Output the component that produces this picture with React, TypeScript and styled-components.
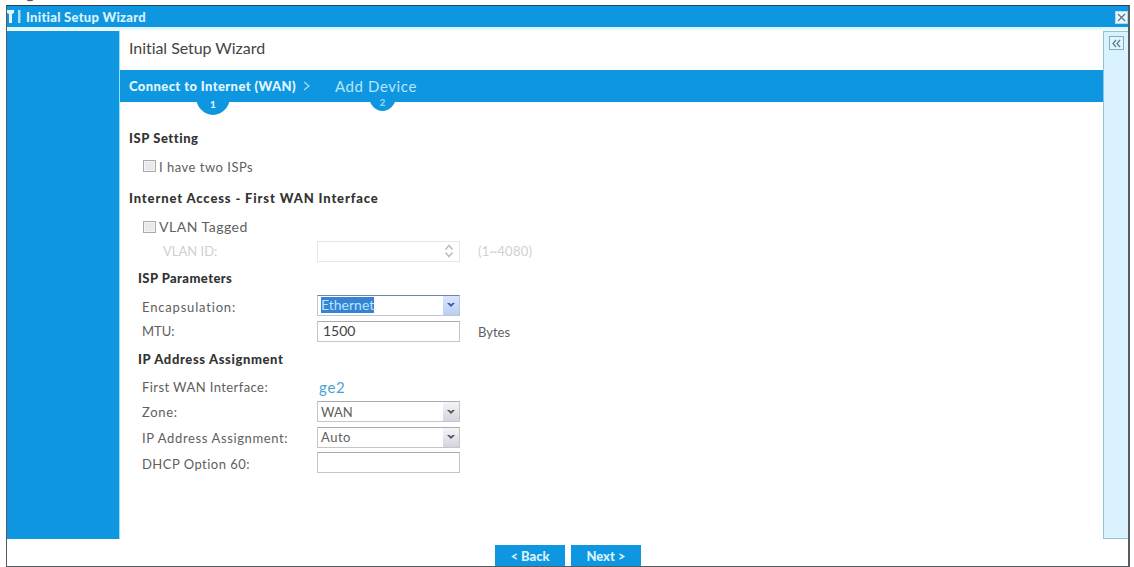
import React from 'react';
import styled, { createGlobalStyle } from 'styled-components';

const BLUE = '#0f96e0';

const GlobalStyle = createGlobalStyle`
  * { box-sizing: border-box; }
  body {
    margin: 0;
    background: #fff;
    font-family: Lato, "Liberation Sans", sans-serif;
    overflow: hidden;
  }
`;

const Page = styled.div`
  width: 1134px;
  height: 567px;
  display: flex;
  flex-direction: column;
`;

const CaptionTail = styled.svg`
  display: block;
  width: 10px;
  height: 5px;
  flex: none;
  margin-left: 26px;
`;

const Window = styled.div`
  width: 1124px;
  height: 562px;
  margin-left: 6px;
  display: flex;
  flex-direction: column;
  border: solid #555c60;
  border-width: 1px 2px 1px 1px;
  border-top-color: #1d4560;
`;

const TitleBar = styled.header`
  height: 21px;
  flex: none;
  display: flex;
  align-items: center;
  background: ${BLUE};
  color: #e4f6ff;
`;

const Text = styled.span<{ $size?: number; $weight?: number; $spacing?: number; $color?: string; $shift?: number }>`
  display: block;
  white-space: nowrap;
  line-height: 18px;
  font-size: ${(p) => p.$size ?? 13}px;
  font-weight: ${(p) => p.$weight ?? 400};
  letter-spacing: ${(p) => p.$spacing ?? 0}px;
  color: ${(p) => p.$color ?? '#606060'};
  margin-top: ${(p) => (p.$shift ?? 0) * 2}px;
`;

const ToolIcon = styled.svg`
  width: 15px;
  height: 15px;
  margin-right: 4px;
`;

const CloseButton = styled.button`
  width: 13px;
  height: 13px;
  margin: 2px 0 0 auto;
  padding: 0;
  display: grid;
  place-items: center;
  border: 1px solid #a9dcf3;
  background: #e9f8fe;
`;

const Body = styled.div`
  height: 512px;
  flex: none;
  display: flex;
  padding-top: 4px;
  background: linear-gradient(#dff5fe 0, #dff5fe 2px, #fff 4px);
`;

const Sidebar = styled.aside`
  width: 113px;
  background: ${BLUE};
  border-right: 1px solid #8fe0fb;
`;

const Main = styled.main`
  flex: 1;
  display: flex;
  flex-direction: column;
  background: #fff;
`;

const Heading = styled.div`
  height: 39px;
  padding: 8px 0 0 9px;
`;

const Steps = styled.nav`
  height: 32px;
  flex: none;
  display: flex;
  padding: 7px 0 0 9px;
  background: ${BLUE};
`;

const Step = styled.div<{ $gap?: number }>`
  position: relative;
  height: 25px;
  margin-left: ${(p) => p.$gap ?? 0}px;
`;

const StepBadge = styled.span<{ $left: number; $w: number; $h: number; $color: string }>`
  position: absolute;
  left: ${(p) => p.$left}px;
  bottom: -${(p) => p.$h - 10}px;
  width: ${(p) => p.$w}px;
  height: ${(p) => p.$h}px;
  display: grid;
  place-items: center;
  border-radius: 0 0 50% 50% / 0 0 80% 80%;
  background: ${BLUE};
  color: ${(p) => p.$color};
  font-size: 10px;
  line-height: 12px;
  font-weight: 900;
`;

const Form = styled.form`
  padding-top: 21px;
`;

const Row = styled.div<{ $h: number; $indent?: number }>`
  height: ${(p) => p.$h}px;
  padding-left: ${(p) => p.$indent ?? 22}px;
  display: flex;
  align-items: center;
`;

const Label = styled.label<{ $w?: number }>`
  width: ${(p) => p.$w ?? 175}px;
  flex: none;
`;

const Checkbox = styled.span`
  width: 13px;
  height: 12px;
  margin: 0 3px 1px 1px;
  background: #e9e9e9;
  border: 1px solid #aaa;
  box-shadow: inset 0 0 0 1px #f4f4f4;
`;

const Field = styled.div<{ $border?: string; $top?: string }>`
  width: 143px;
  height: 21px;
  flex: none;
  display: flex;
  align-items: center;
  justify-content: space-between;
  padding-left: 3px;
  background: #fff;
  border: 1px solid ${(p) => p.$border ?? '#c3c5c8'};
  border-top-color: ${(p) => p.$top ?? p.$border ?? '#a9abae'};
`;

const Selected = styled.span`
  height: 16px;
  display: flex;
  align-items: center;
  background: #3583d5;
`;

const Value = styled.div`
  padding-left: 2px;
`;

const Arrow = styled.span<{ $active?: boolean }>`
  width: 16px;
  height: 19px;
  display: grid;
  place-items: center;
  background: ${(p) => (p.$active ? 'linear-gradient(#dbe6fb, #b9cdf3)' : 'linear-gradient(#f5f5f8, #d3d4de)')};
`;

const Unit = styled.div`
  margin-left: 18px;
`;

const Tools = styled.aside`
  width: 25px;
  display: flex;
  flex-direction: column;
  align-items: center;
  padding-top: 4px;
  background: #d9f2fd;
  border: solid #8cc5d6;
  border-width: 1px 0 1px 1px;
`;

const Collapse = styled.button`
  width: 15px;
  height: 14px;
  padding: 0;
  display: grid;
  place-items: center;
  background: #e0f4fb;
  border: 1px solid #83aebb;
`;

const Footer = styled.footer`
  flex: 1;
  display: flex;
  justify-content: flex-start;
  align-items: flex-end;
  gap: 6px;
  padding-left: 488px;
`;

const WizardButton = styled.button`
  width: 70px;
  height: 21px;
  padding: 0;
  display: grid;
  place-items: center;
  border: 0;
  background: ${BLUE};
  font-family: inherit;
`;

const Chevron = ({ active = false }: { active?: boolean }) => (
  <Arrow $active={active}>
    <svg width="8" height="6" viewBox="0 0 8 6">
      <path d="M0 1h2.5L4 2.5 5.5 1H8L4 5z" fill={active ? '#36589a' : '#555'} />
    </svg>
  </Arrow>
);

export default function App() {
  return (
    <Page>
      <GlobalStyle />
      <CaptionTail viewBox="0 0 10 5">
        <path d="M1 0Q4 1.4 7 0" fill="none" stroke="#555" strokeWidth="1.2" />
      </CaptionTail>
      <Window>
        <TitleBar>
          <ToolIcon viewBox="0 0 15 15">
            <path d="M0 1h7v3L5 5v9H2V5L0 4z" fill="#e4f6ff" />
            <path d="M11 1h2.500v13H11z" fill="#a9e2fa" />
          </ToolIcon>
          <Text $size={13} $weight={900} $color="#d9f3ff" $spacing={0.27}>Initial Setup Wizard</Text>
          <CloseButton aria-label="Close">
            <svg width="9" height="9" viewBox="0 0 9 9">
              <path d="M1 1l7 7M8 1L1 8" stroke="#60727d" strokeWidth="1.2" />
            </svg>
          </CloseButton>
        </TitleBar>
        <Body>
          <Sidebar />
          <Main>
            <Heading>
              <Text $size={16} $color="#444" $spacing={-0.05}>Initial Setup Wizard</Text>
            </Heading>
            <Steps>
              <Step>
                <Text $size={13} $weight={900} $color="#e2f6ff" $spacing={0.4}>Connect to Internet (WAN)</Text>
                <StepBadge $left={67} $w={34} $h={23} $color="#e2f6ff">1</StepBadge>
              </Step>
              <Step $gap={7}>
                <svg width="7" height="18" viewBox="0 0 7 18">
                  <path d="M1 5l5 4-5 4" fill="none" stroke="#a5ddf9" strokeWidth="1.2" />
                </svg>
              </Step>
              <Step $gap={25}>
                <Text $size={15} $color="#b9e6fc" $spacing={0.6}>Add Device</Text>
                <StepBadge $left={34} $w={27} $h={19} $color="#8ad5f8">2</StepBadge>
              </Step>
            </Steps>
            <Form>
              <Row $h={30} $indent={9}><Text $weight={900} $color="#333" $spacing={0.55}>ISP Setting</Text></Row>
              <Row $h={27}><Checkbox /><Text $spacing={0.5}>I have two ISPs</Text></Row>
              <Row $h={36} $indent={9}><Text $weight={900} $color="#333" $spacing={0.87}>Internet Access - First WAN Interface</Text></Row>
              <Row $h={22}><Checkbox /><Text $size={14} $spacing={0.5}>VLAN Tagged</Text></Row>
              <Row $h={26} $indent={43}>
                <Label $w={154}><Text $color="#d0d0d0">VLAN ID:</Text></Label>
                <Field $border="#e6e6e6">
                  <span />
                  <svg width="18" height="16" viewBox="0 0 18 16">
                    <path d="M4.500 6.500L8 2.500l3.500 4M4.500 9.500l3.500 4 3.500-4" fill="none" stroke="#bdbdbd" strokeWidth="1.500" />
                  </svg>
                </Field>
                <Unit><Text $color="#d0d0d0" $spacing={0.25}>(1~4080)</Text></Unit>
              </Row>
              <Row $h={28} $indent={18}><Text $weight={900} $color="#333" $spacing={0.42}>ISP Parameters</Text></Row>
              <Row $h={26}>
                <Label><Text $shift={2} $spacing={0.82}>Encapsulation:</Text></Label>
                <Field $border="#bcc6d6" $top="#7184a4">
                  <Selected><Text $size={14} $color="#b9e4ff">Ethernet</Text></Selected>
                  <Chevron active />
                </Field>
              </Row>
              <Row $h={26}>
                <Label><Text>MTU:</Text></Label>
                <Field><Value><Text $size={14} $color="#444">1500</Text></Value></Field>
                <Unit><Text $shift={1}>Bytes</Text></Unit>
              </Row>
              <Row $h={30} $indent={18}><Text $weight={900} $color="#333" $spacing={0.62}>IP Address Assignment</Text></Row>
              <Row $h={25}>
                <Label><Text $spacing={0.42}>First WAN Interface:</Text></Label>
                <Value><Text $size={15} $color="#4ba3cd" $spacing={0.7}>ge2</Text></Value>
              </Row>
              <Row $h={25}>
                <Label><Text $spacing={0.7}>Zone:</Text></Label>
                <Field><Text>WAN</Text><Chevron /></Field>
              </Row>
              <Row $h={26}>
                <Label><Text $shift={1} $spacing={0.62}>IP Address Assignment:</Text></Label>
                <Field><Text $spacing={0.5}>Auto</Text><Chevron /></Field>
              </Row>
              <Row $h={25}>
                <Label><Text $shift={1} $spacing={0.48}>DHCP Option 60:</Text></Label>
                <Field />
              </Row>
            </Form>
          </Main>
          <Tools>
            <Collapse aria-label="Collapse">
              <svg width="11" height="9" viewBox="0 0 11 9">
                <path d="M5 1L2 4.500 5 8M9 1L6 4.500 9 8" fill="none" stroke="#5f7f8c" strokeWidth="1.300" />
              </svg>
            </Collapse>
          </Tools>
        </Body>
        <Footer>
          <WizardButton><Text $weight={900} $color="#d9f2ff">&lt; Back</Text></WizardButton>
          <WizardButton><Text $weight={900} $color="#d9f2ff">Next &gt;</Text></WizardButton>
        </Footer>
      </Window>
    </Page>
  );
}
